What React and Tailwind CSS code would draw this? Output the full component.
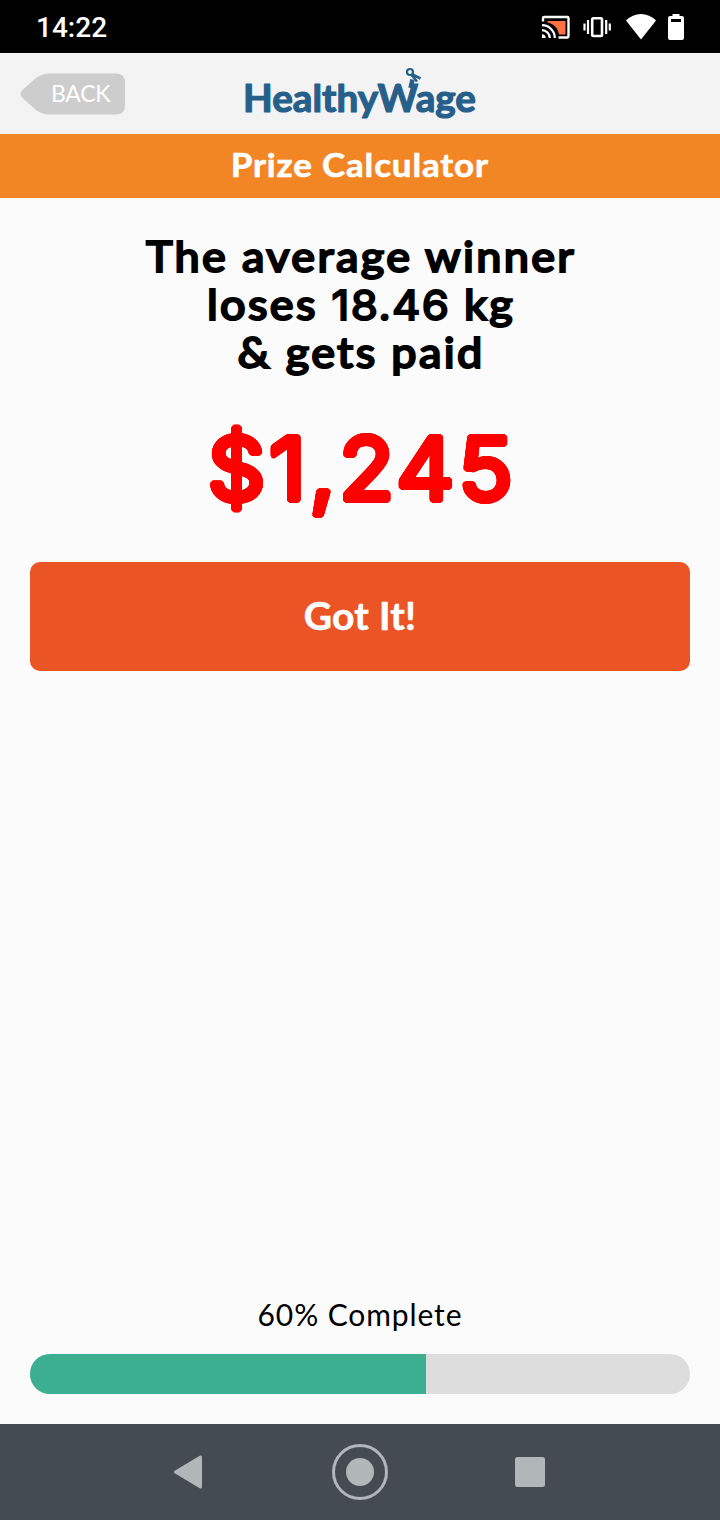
// Builds a ring of shadows that thickens glyphs evenly and rounds their ends.
function ring(radius, color) {
  const steps = 24;
  return Array.from({ length: steps }, (_, i) => {
    const a = (i / steps) * Math.PI * 2;
    return `${(Math.cos(a) * radius).toFixed(2)}px ${(Math.sin(a) * radius).toFixed(2)}px 0.4px ${color}`;
  }).join(', ');
}

function StatusIcons() {
  return (
    <svg className="h-[52px] w-[160px]" viewBox="530 0 160 52" fill="none" aria-hidden="true">
      <path d="M547.5 20H565.5V33.500H559C558 27 553.500 22.500 547.500 21.500Z" fill="#ff7043" />
      <path d="M543 20.500V17.200Q543 16 544.200 16H567.300Q568.500 16 568.500 17.200V35.300Q568.500 36.500 567.300 36.500H558.500" stroke="#fff" strokeWidth="2.400" />
      <path d="M542 24.200A12.800 12.800 0 0 1 554.800 37M542 29.200A7.800 7.800 0 0 1 549.800 37" stroke="#fff" strokeWidth="2.200" />
      <path d="M542 33.300A4 4 0 0 1 545.800 37H542Z" fill="#fff" />
      <rect x="592.200" y="17.200" width="9.800" height="17.800" rx="1.200" stroke="#fff" strokeWidth="2.600" />
      <path d="M588 19V33M606.200 19V33M584.500 22.500V29.500M609.800 22.500V29.500" stroke="#fff" strokeWidth="2.200" />
      <path d="M626 19.500Q632.500 13 641 13T656 19.500L641 38.500Z" fill="#fff" />
      <path d="M672.500 15V13H679.500V15H682Q684 15 684 17V37Q684 39 682 39H670Q668 39 668 37V17Q668 15 670 15ZM671 18V21H681V18Z" fill="#fff" fillRule="evenodd" />
    </svg>
  );
}

function Logo() {
  return (
    <svg className="h-[80px] w-[240px]" viewBox="240 54 240 80" role="img" aria-label="HealthyWage">
      <text x="243" y="111.500" textLength="233" lengthAdjust="spacingAndGlyphs" fill="#265f8a" stroke="#265f8a" strokeWidth="1.2" strokeLinejoin="round" className="font-['Lato',sans-serif] font-bold" fontSize="38">HealthyWage</text>
      <g stroke="#265f8a" fill="none">
        <path d="M410.500 88L412.500 79.500" strokeWidth="4.500" />
        <circle cx="410" cy="72" r="3" strokeWidth="2.200" />
        <path d="M411.500 75L417 81.500M412.500 74.500L420.500 78.500" strokeWidth="2.600" />
      </g>
    </svg>
  );
}

export default function App() {
  const progress = 60;
  return (
    <div className="flex h-[1520px] w-[720px] flex-col overflow-hidden bg-[#fbfbfb] font-['Lato',sans-serif] text-black">
      <div className="flex h-[53px] shrink-0 items-center justify-between bg-black pl-[36px] pr-[30px]">
        <span className="pt-[2px] font-['Roboto',sans-serif] text-[28px] font-medium leading-none text-white">14:22</span>
        <StatusIcons />
      </div>

      <header className="grid h-[81px] shrink-0 grid-cols-[220px_1fr_220px] items-center bg-[#f3f3f3] px-5">
        <button className="relative flex h-[42px] w-[105px] items-center">
          <svg className="absolute inset-0 h-full w-full" viewBox="0 0 105 42" aria-hidden="true">
            <path d="M30 .5H96Q105 .5 105 9.500V32.500Q105 41.500 96 41.500H30Q22 41.500 16 37L2.500 25Q-1.500 21 2.500 17L16 5Q22 .5 30 .5Z" fill="#cdcdcd" />
          </svg>
          <span className="relative pl-[31px] text-[23px] leading-none tracking-[-0.3px] text-white">BACK</span>
        </button>
        <Logo />
      </header>

      <div className="flex h-[64px] shrink-0 items-center justify-center bg-[#f38624] pb-[3px]">
        <h1 className="scale-x-[1.06] text-[33px] font-bold leading-none tracking-[0.8px] text-white [-webkit-text-stroke:0.6px_#fff] [stroke-linejoin:round]">
          Prize Calculator
        </h1>
      </div>

      <main className="flex min-h-0 flex-1 flex-col px-[30px]">
        <h2 className="mt-[34px] scale-x-[1.07] pl-[2px] text-center text-[42px] font-medium leading-[48px] tracking-[2.2px] [-webkit-text-stroke:2px_#000] [stroke-linejoin:round]">
          The average winner
          <br />
          loses <span className="font-['Inter',sans-serif] text-[41px] font-normal leading-none tracking-[1.2px]">18.46</span> kg
          <br />
          &amp; gets paid
        </h2>
        <p
          className="mt-[37px] scale-x-[1.05] pl-[4px] text-center font-['Inter',sans-serif] text-[86px] font-normal leading-[112px] tracking-[3.4px] text-[#ff0000] [-webkit-text-stroke:3px_#f00]"
          style={{ textShadow: ring(2.6, '#f00') }}
        >
          $1,245
        </p>
        <button className="mt-[37px] h-[109px] shrink-0 rounded-[10px] bg-[#eb5425] pb-[3px] text-[39px] font-bold tracking-[0.3px] text-white [-webkit-text-stroke:0.6px_#fff]">
          Got It!
        </button>
        <p className="mt-auto text-center text-[30px] leading-[36px] tracking-[0.9px]">{progress}% Complete</p>
        <div className="mb-[30px] mt-[22px] h-[40px] shrink-0 overflow-hidden rounded-full bg-[#dddddd]">
          <div className="h-full bg-[#3caf91]" style={{ width: `${progress}%` }} />
        </div>
      </main>

      <nav className="flex h-[96px] shrink-0 items-center justify-center bg-[#454c51]">
        <svg className="h-[96px] w-[720px]" viewBox="0 1424 720 96" aria-hidden="true">
          <path d="M200.500 1457V1487L175.500 1472Z" fill="#b1b6b8" stroke="#b1b6b8" strokeWidth="3" strokeLinejoin="round" />
          <circle cx="360" cy="1472" r="26.500" fill="none" stroke="#b1b6bb" strokeWidth="3" />
          <circle cx="360" cy="1472" r="14" fill="#b1b6b8" />
          <rect x="515" y="1457" width="30" height="30" rx="2.500" fill="#b1b6b8" />
        </svg>
      </nav>
    </div>
  );
}
